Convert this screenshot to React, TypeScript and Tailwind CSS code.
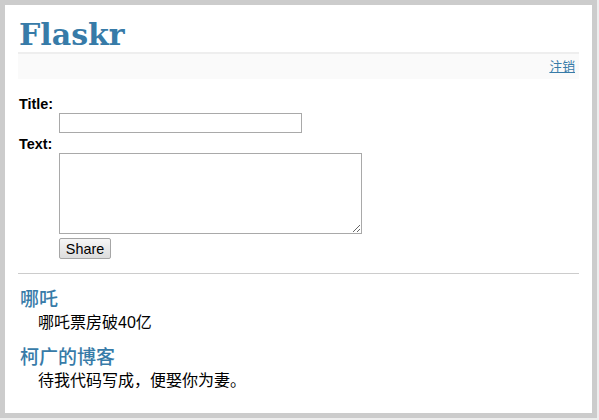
export default function App() {
  const entries = [
    { title: "哪吒", text: "哪吒票房破40亿" },
    { title: "柯广的博客", text: "待我代码写成，便娶你为妻。" },
  ];

  return (
    <div className="w-[599px] h-[420px] bg-[#eee] font-['Liberation_Sans','Noto_Sans_CJK_SC',sans-serif]">
      <div className="w-[597px] h-[418px] border-[5px] border-[#ccc] bg-white px-[13px] pt-[13px]">
        {/* header */}
        <h1 className="h-[36px] border-b-2 border-[#eee] font-['DejaVu_Serif','Noto_Sans_CJK_SC',serif] text-[30px] font-bold leading-[34px] text-[#377ba8] pl-[1px]">
          Flaskr
        </h1>
        <div className="h-[25px] bg-[#fafafa] pr-[4px] pt-[4px] text-right text-[12.8px] leading-[18px]">
          <a href="#" className="text-[#377ba8] underline">
            注销
          </a>
        </div>

        {/* add entry */}
        <form className="mt-[16px] h-[179px] border-b border-[#ccc] text-[14.4px]">
          <dl className="font-bold">
            <dt className="h-[18px] leading-[18px] pl-[1px]">Title:</dt>
            <dd className="ml-[41px]">
              <input
                type="text"
                className="block w-[243px] h-[20px] border border-[#a9a9a9] bg-white px-1 font-normal"
              />
            </dd>
            <dt className="mt-[2px] h-[18px] leading-[19px] pl-[1px]">Text:</dt>
            <dd className="ml-[41px]">
              <textarea className="block w-[303px] h-[81px] border border-[#a9a9a9] bg-white font-normal" />
            </dd>
            <dd className="ml-[41px] mt-[4px]">
              <button
                type="button"
                className="h-[21px] w-[52px] rounded-[2px] border border-[#a6a6a6] bg-gradient-to-b from-[#f6f6f6] to-[#dddddd] text-[14.4px] font-normal leading-[18px] text-black"
              >
                Share
              </button>
            </dd>
          </dl>
        </form>

        {/* entries */}
        <ul className="pt-[14px]">
          {entries.map((e, i) => (
            <li key={i} className={i > 0 ? "mt-[13px] ml-[19px]" : "ml-[19px]"}>
              <h2 className="-ml-[19px] pl-[2px] h-[23px] font-['DejaVu_Serif','Noto_Sans_CJK_SC',serif] text-[19px] font-medium leading-[22px] text-[#377ba8]">
                {e.title}
              </h2>
              <div className="h-[22px] pl-[1px] text-[16px] leading-[24px] text-black">{e.text}</div>
            </li>
          ))}
        </ul>
      </div>
    </div>
  );
}
